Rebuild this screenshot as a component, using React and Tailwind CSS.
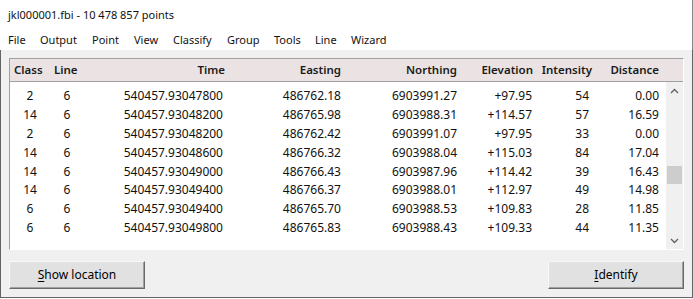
import React from 'react';

const columns = [
  { key: 'cls', label: 'Class', w: 'w-[40px]', head: 'text-left pl-[4px]', cell: 'text-center' },
  { key: 'line', label: 'Line', w: 'w-[34px]', head: 'text-left pl-[4px]', cell: 'text-center' },
  { key: 'time', label: 'Time', w: 'w-[144px]', head: 'text-right pr-[3px]', cell: 'text-right pr-[5px]' },
  { key: 'east', label: 'Easting', w: 'w-[117px]', head: 'text-right pr-[4px]', cell: 'text-right pr-[4px]' },
  { key: 'north', label: 'Northing', w: 'w-[116px]', head: 'text-right pr-[4px]', cell: 'text-right pr-[4px]' },
  { key: 'elev', label: 'Elevation', w: 'w-[76px]', head: 'text-right pr-[4px]', cell: 'text-right pr-[5px]' },
  { key: 'int', label: 'Intensity', w: 'w-[58px]', head: 'text-right pr-[3px]', cell: 'text-right pr-[6px]' },
  { key: 'dist', label: 'Distance', w: 'w-[68px]', head: 'text-right pr-[4px]', cell: 'text-right pr-[4px]' },
];

const rows = [
  ['2', '6', '540457.93047800', '486762.18', '6903991.27', '+97.95', '54', '0.00'],
  ['14', '6', '540457.93048200', '486765.98', '6903988.31', '+114.57', '57', '16.59'],
  ['2', '6', '540457.93048200', '486762.42', '6903991.07', '+97.95', '33', '0.00'],
  ['14', '6', '540457.93048600', '486766.32', '6903988.04', '+115.03', '84', '17.04'],
  ['14', '6', '540457.93049000', '486766.43', '6903987.96', '+114.42', '39', '16.43'],
  ['14', '6', '540457.93049400', '486766.37', '6903988.01', '+112.97', '49', '14.98'],
  ['6', '6', '540457.93049400', '486765.70', '6903988.53', '+109.83', '28', '11.85'],
  ['6', '6', '540457.93049800', '486765.83', '6903988.43', '+109.33', '44', '11.35'],
];

// widths measured from one menu label's start to the next
const menu = [
  ['File', 'w-[32px]'],
  ['Output', 'w-[52px]'],
  ['Point', 'w-[42px]'],
  ['View', 'w-[39px]'],
  ['Classify', 'w-[54px]'],
  ['Group', 'w-[47px]'],
  ['Tools', 'w-[41px]'],
  ['Line', 'w-[36px]'],
  ['Wizard', 'w-[50px]'],
];

const Chevron = ({ down }) => (
  <svg width="9" height="6" viewBox="0 0 9 6" className="block">
    <polyline
      points={down ? '1,1 4.5,4.5 8,1' : '1,5 4.5,1.5 8,5'}
      fill="none"
      stroke="#606060"
      strokeWidth="1.3"
    />
  </svg>
);

const Button = ({ first, rest }) => (
  <button className="h-[28px] w-[136px] bg-[#e1e1e1] border border-t-[#f7f7f7] border-l-[#f7f7f7] border-r-[#696969] border-b-[#696969] shadow-[inset_-1px_-1px_0_#a0a0a0,inset_1px_1px_0_#e3e3e3] text-[12px] text-[#000] leading-none">
    <span className="underline underline-offset-2">{first}</span>
    {rest}
  </button>
);

export default function App() {
  return (
    <div className="w-[693px] h-[299px] bg-white overflow-hidden font-['Noto_Sans',sans-serif] text-[12px] text-[#111] flex flex-col">
      <div className="h-[31px] shrink-0 flex items-center pl-[8px] pb-[1px] text-[11px] border-r border-[#8a8a8a]">
        jkl000001.fbi - 10 478 857 points
      </div>
      <div className="h-[19px] shrink-0 flex items-center pl-[8px] text-[11px] border-r border-[#8a8a8a]">
        {menu.map(([m, w]) => (
          <span key={m} className={`${w} shrink-0`}>
            {m}
          </span>
        ))}
      </div>
      <div className="h-[248px] shrink-0 bg-[#f0f0f0] border-l border-r border-b border-[#646464] flex flex-col">
        <div className="mt-[8px] ml-[8px] w-[675px] h-[192px] flex flex-col border border-t-[#a0a0a0] border-l-[#a0a0a0] border-r-[#ffffff] border-b-[#ffffff]">
          <div className="h-[23px] shrink-0 flex items-center bg-[#ebe3e3] border-b border-[#a0a0a0] font-semibold text-[11.5px] text-[#1a1a1a]">
            {columns.map((c) => (
              <div key={c.key} className={`${c.w} shrink-0 ${c.head}`}>
                {c.label}
              </div>
            ))}
          </div>
          <div className="flex flex-1 min-h-0">
            <div className="flex-1 bg-white pt-[5px]">
              {rows.map((r, i) => (
                <div key={i} className="h-[18.8px] flex items-center">
                  {columns.map((c, j) => (
                    <div key={c.key} className={`${c.w} shrink-0 ${c.cell}`}>
                      {r[j]}
                    </div>
                  ))}
                </div>
              ))}
            </div>
            <div className="w-[17px] shrink-0 bg-[#f0f0f0] flex flex-col items-center">
              <div className="h-[17px] flex items-center justify-center">
                <Chevron />
              </div>
              <div className="h-[67px]" />
              <div className="w-[15px] h-[18px] bg-[#cdcdcd]" />
              <div className="flex-1" />
              <div className="h-[17px] flex items-center justify-center">
                <Chevron down />
              </div>
            </div>
          </div>
        </div>
        <div className="mt-[11px] flex justify-between pl-[8px] pr-[8px]">
          <Button first="S" rest="how location" />
          <Button first="I" rest="dentify" />
        </div>
      </div>
    </div>
  );
}
